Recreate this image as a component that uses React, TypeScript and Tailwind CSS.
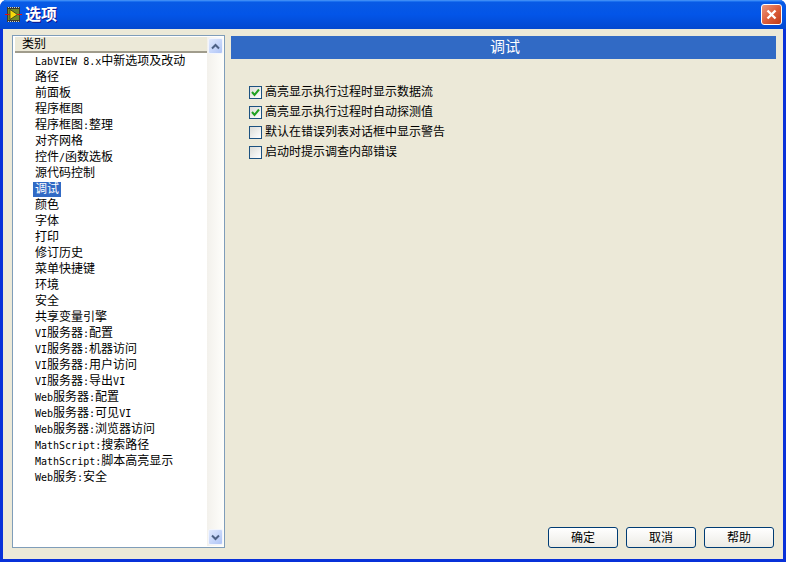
import React from "react";

const font = { fontFamily: '"DejaVu Sans","Noto Sans CJK SC",sans-serif' };

const items = [
  "LabVIEW 8.x中新选项及改动", "路径", "前面板", "程序框图", "程序框图:整理", "对齐网格", "控件/函数选板", "源代码控制", "调试", "颜色", "字体", "打印", "修订历史", "菜单快捷键", "环境", "安全", "共享变量引擎", "VI服务器:配置", "VI服务器:机器访问", "VI服务器:用户访问", "VI服务器:导出VI", "Web服务器:配置", "Web服务器:可见VI", "Web服务器:浏览器访问", "MathScript:搜索路径", "MathScript:脚本高亮显示", "Web服务:安全",
];

const checks: [string, boolean][] = [
  ["高亮显示执行过程时显示数据流", true],
  ["高亮显示执行过程时自动探测值", true],
  ["默认在错误列表对话框中显示警告", false],
  ["启动时提示调查内部错误", false],
];

function Mixed({ text }: { text: string }) {
  return (
    <>
      {text.split(/([\x00-\x7f]+)/).map((part, i) =>
        /^[\x00-\x7f]+$/.test(part) ? (
          <span key={i} className="font-['DejaVu_Sans_Mono'] text-[10px]">{part}</span>
        ) : (
          <span key={i}>{part}</span>
        )
      )}
    </>
  );
}

function ScrollBtn({ up }: { up?: boolean }) {
  return (
    <div className="w-[15px] h-[16px] rounded-[2px] border border-[#f2f5fd] bg-gradient-to-br from-[#e1eafe] to-[#afc4f6] flex items-center justify-center">
      <svg width="9" height="7" viewBox="0 0 9 7">
        <path d={up ? "M1 5.5 L4.5 2 L8 5.5" : "M1 1.5 L4.5 5 L8 1.5"} fill="none" stroke="#4d6185" strokeWidth="2" />
      </svg>
    </div>
  );
}

function Btn({ label }: { label: string }) {
  return (
    <div className="w-[70px] h-[21px] rounded-[3px] border border-[#003c74] bg-gradient-to-b from-white to-[#ecebe5] flex items-center justify-center text-[12px] text-black">
      {label}
    </div>
  );
}

export default function App() {
  return (
    <div style={font} className="w-[786px] h-[562px] bg-[#0831d9] rounded-t-[7px] flex flex-col overflow-hidden text-[12px] leading-[16px] text-black">
      <div className="h-[29px] shrink-0 bg-gradient-to-b from-[#0a5be4] via-[#0355e8] to-[#0348cf] flex items-center pl-[5px] pr-[4px] shadow-[inset_0_1px_0_#3d8cf5,inset_0_2px_0_#1a70f0]">
        <svg width="17" height="17" viewBox="0 0 17 17" className="mr-[3px]">
          <rect x="2" y="1" width="13" height="15" fill="#3a3a32" />
          <rect x="3" y="3" width="11" height="11" fill="#6f8a2a" />
          <path d="M5 3.5 L12.5 8.5 L5 13.5 Z" fill="#f5d90a" stroke="#222" strokeWidth="0.7" />
          <path d="M0 8.5 H5 M12 8.5 H17" stroke="#e01010" strokeWidth="1.2" />
          <path d="M3 1.5 H14 M3 15.5 H14" stroke="#ccc" strokeWidth="1" strokeDasharray="1 1" />
        </svg>
        <span className="text-white font-bold text-[16px] [text-shadow:1px_1px_0_#0f1089]">选项</span>
        <div className="ml-auto w-[21px] h-[21px] rounded-[3px] border border-white bg-gradient-to-br from-[#e9977d] via-[#dd5f3c] to-[#c03a14] flex items-center justify-center">
          <svg width="13" height="13" viewBox="0 0 13 13">
            <path d="M2.5 2.5 L10.5 10.5 M10.5 2.5 L2.5 10.5" stroke="#fff" strokeWidth="2.4" />
          </svg>
        </div>
      </div>
      <div className="h-[530px] shrink-0 mx-[3px] bg-[#ece9d8] flex pl-[9px] pt-[6px] pb-[11px] pr-[6px] gap-[6px]">
        <div className="w-[213px] h-[513px] shrink-0 border border-[#7f9db9] bg-white flex p-[1px]">
          <div className="w-[193px] shrink-0 pl-[2px]">
            <div className="h-[16px] -ml-[1px] pl-[7px] bg-[#ece9d8] border-b-2 border-[#a09c8c] leading-[14px] text-[12px] box-border">类别</div>
            <div className="flex flex-col">
              {items.map((t) => (
                <div key={t} className="h-[16px] pl-[19px] whitespace-nowrap text-[12px] leading-[16px]">
                  {t === "调试" ? (
                    <span className="inline-block -ml-[2px] w-[28px] pl-[2px] bg-[#316ac5] text-white h-[15px] leading-[15px]">{t}</span>
                  ) : (
                    <Mixed text={t} />
                  )}
                </div>
              ))}
            </div>
          </div>
          <div className="w-[17px] shrink-0 bg-gradient-to-r from-[#f3f1ec] to-[#fefefb] flex flex-col justify-between items-center py-[1px]">
            <ScrollBtn up />
            <ScrollBtn />
          </div>
        </div>
        <div className="flex-1 flex flex-col pt-[1px] pr-[1px]">
          <div className="h-[23px] bg-[#316ac5] text-white text-center text-[15px] leading-[23px] pl-[3px]">调试</div>
          <div className="pl-[18px] pt-[25px] flex flex-col gap-[4px]">
            {checks.map(([t, c]) => (
              <div key={t} className="h-[16px] flex items-center gap-[3px]">
                <div className="w-[13px] h-[13px] border border-[#1c5180] bg-gradient-to-br from-[#dcdcd7] to-white flex items-center justify-center">
                  {c && (
                    <svg width="9" height="9" viewBox="0 0 9 9">
                      <path d="M1 4 L3.5 7 L8 1.5" fill="none" stroke="#21a121" strokeWidth="2" />
                    </svg>
                  )}
                </div>
                <span className="text-[12px] whitespace-nowrap">{t}</span>
              </div>
            ))}
          </div>
          <div className="mt-auto flex justify-end gap-[8px] pr-[2px]">
            <Btn label="确定" />
            <Btn label="取消" />
            <Btn label="帮助" />
          </div>
        </div>
      </div>
    </div>
  );
}
